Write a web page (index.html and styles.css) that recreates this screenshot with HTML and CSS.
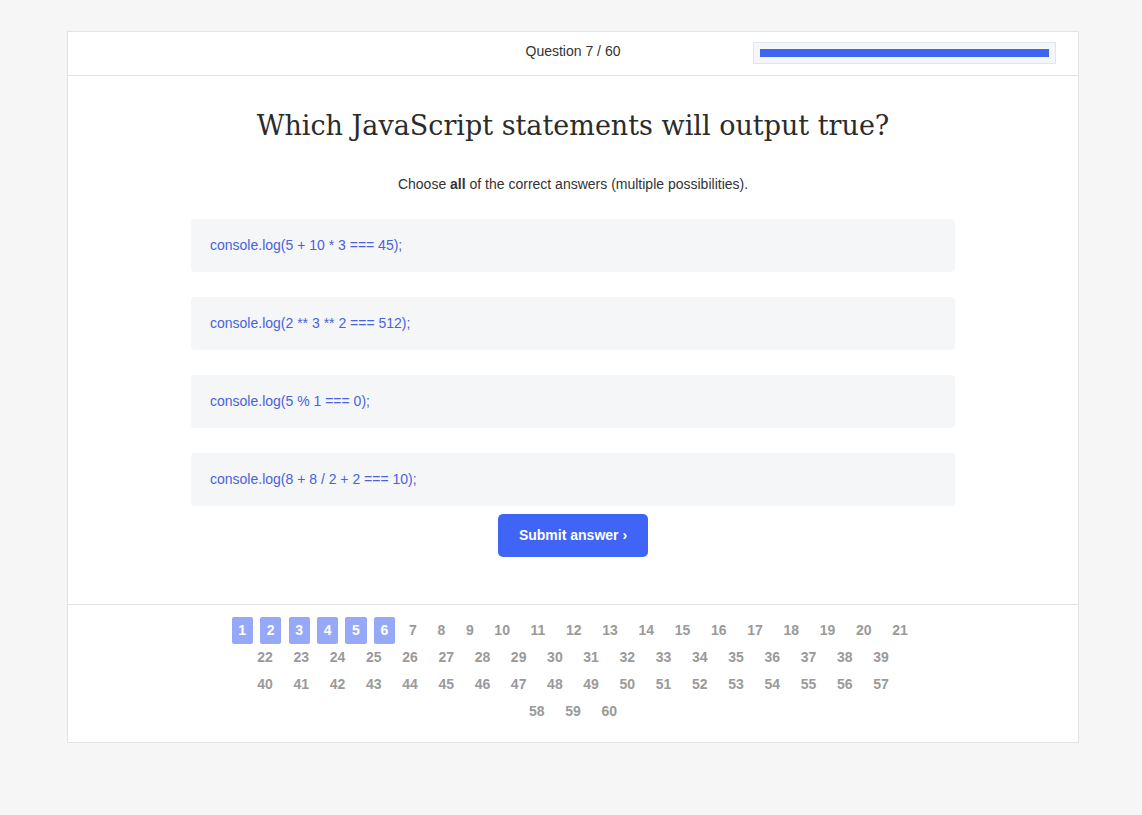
FILE: index.html
```html
<!DOCTYPE html>
<html lang="en">
<head>
<meta charset="utf-8">
<title>Quiz</title>
<link rel="stylesheet" href="styles.css">
</head>
<body>
<div class="card">
  <header class="quiz-header">
    <div class="spacer"></div>
    <div class="counter">Question 7 / 60</div>
    <div class="progress"><div class="progress-fill"></div></div>
  </header>
  <main class="quiz-main">
    <h1 class="title">Which JavaScript statements will output true?</h1>
    <p class="hint">Choose <b>all</b> of the correct answers (multiple possibilities).</p>
    <ul class="options">
      <li class="option">console.log(5 + 10 * 3 === 45);</li>
      <li class="option">console.log(2 ** 3 ** 2 === 512);</li>
      <li class="option">console.log(5 % 1 === 0);</li>
      <li class="option">console.log(8 + 8 / 2 + 2 === 10);</li>
    </ul>
    <button class="submit">Submit answer ›</button>
  </main>
  <footer class="quiz-footer">
    <nav class="pages">
      <span class="pg done">1</span><span class="pg done">2</span><span class="pg done">3</span><span class="pg done">4</span><span class="pg done">5</span><span class="pg done">6</span>
      <span class="pg">7</span><span class="pg">8</span><span class="pg">9</span><span class="pg">10</span><span class="pg">11</span><span class="pg">12</span><span class="pg">13</span><span class="pg">14</span><span class="pg">15</span><span class="pg">16</span><span class="pg">17</span><span class="pg">18</span><span class="pg">19</span><span class="pg">20</span><span class="pg">21</span>
      <span class="break"></span>
      <span class="pg">22</span><span class="pg">23</span><span class="pg">24</span><span class="pg">25</span><span class="pg">26</span><span class="pg">27</span><span class="pg">28</span><span class="pg">29</span><span class="pg">30</span><span class="pg">31</span><span class="pg">32</span><span class="pg">33</span><span class="pg">34</span><span class="pg">35</span><span class="pg">36</span><span class="pg">37</span><span class="pg">38</span><span class="pg">39</span>
      <span class="break"></span>
      <span class="pg">40</span><span class="pg">41</span><span class="pg">42</span><span class="pg">43</span><span class="pg">44</span><span class="pg">45</span><span class="pg">46</span><span class="pg">47</span><span class="pg">48</span><span class="pg">49</span><span class="pg">50</span><span class="pg">51</span><span class="pg">52</span><span class="pg">53</span><span class="pg">54</span><span class="pg">55</span><span class="pg">56</span><span class="pg">57</span>
      <span class="break"></span>
      <span class="pg">58</span><span class="pg">59</span><span class="pg">60</span>
    </nav>
  </footer>
</div>
</body>
</html>
```
FILE: styles.css
```css
* { box-sizing: border-box; }
html, body { margin: 0; padding: 0; }
body {
  background: #f6f6f6;
  font-family: "Liberation Sans", Arial, sans-serif;
  color: #333;
  font-size: 14px;
  padding-left: 4px;
}
.card {
  width: 1012px;
  margin: 31px auto 0;
  background: #fff;
  border: 1px solid #e3e3e3;
}
.quiz-header {
  display: grid;
  grid-template-columns: 1fr auto 1fr;
  align-items: center;
  height: 44px;
  padding: 0 22px;
  border-bottom: 1px solid #e3e3e3;
}
.counter { font-size: 14px; color: #333; padding-bottom: 6px; }
.progress {
  justify-self: end;
  width: 303px;
  height: 22px;
  padding: 6px;
  background: #f4f6f9;
  border: 1px solid #e2e5ea;
  margin-bottom: 2px;
}
.progress-fill { height: 8px; background: #3f65f0; }
.quiz-main {
  padding: 32px 0 47px;
  display: flex;
  flex-direction: column;
  align-items: center;
}
.title {
  margin: 0;
  font-family: "DejaVu Serif", Georgia, serif;
  font-weight: normal;
  font-size: 27px;
  line-height: 36px;
  color: #2b2b2b;
}
.hint { margin: 32px 0 26px; line-height: 17px; }
.options {
  list-style: none;
  margin: 0;
  padding: 0;
  width: 764px;
  display: flex;
  flex-direction: column;
  gap: 25px;
}
.option {
  background: #f5f6f8;
  border-radius: 4px;
  height: 53px;
  padding: 0 19px 1px;
  display: flex;
  align-items: center;
  color: #4a62dc;
}
.submit {
  margin-top: 8px;
  width: 150px;
  height: 43px;
  border: 0;
  border-radius: 5px;
  background: #4064f6;
  color: #fff;
  font-family: "Liberation Sans", Arial, sans-serif;
  font-weight: bold;
  font-size: 14px;
  padding: 0 0 1px;
}
.quiz-footer {
  border-top: 1px solid #e3e3e3;
  padding: 12px 0 17px;
}
.pages {
  display: flex;
  flex-wrap: wrap;
  justify-content: center;
  width: 740px;
  margin: 0 auto;
}
.break { flex-basis: 100%; height: 0; }
.pg {
  height: 27px;
  line-height: 27px;
  min-width: 21px;
  padding: 0 6.65px;
  margin: 0 3.7px;
  text-align: center;
  font-weight: bold;
  font-size: 14px;
  color: #9a9a9a;
  border-radius: 2px;
}
.pg.done { background: #96a9f8; color: #fff; }
```
